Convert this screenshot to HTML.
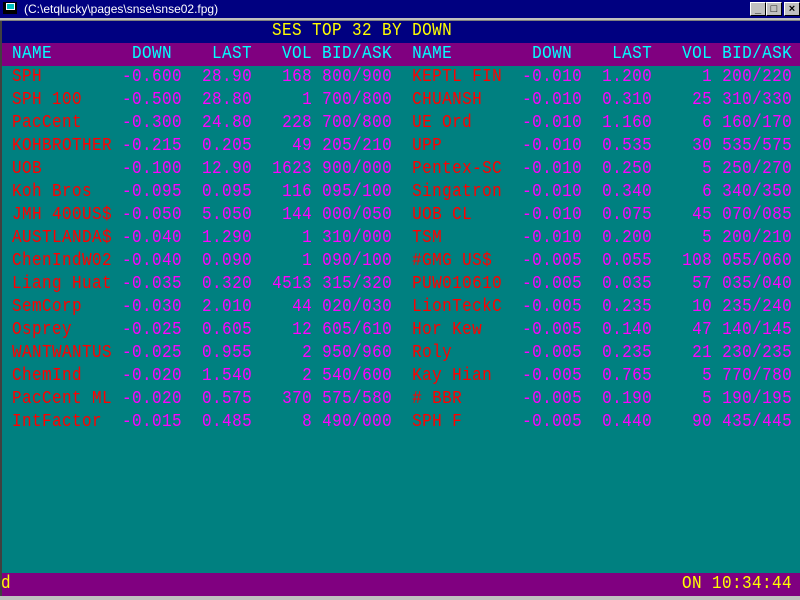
<!DOCTYPE html>
<html><head><meta charset="utf-8"><style>
html,body{margin:0;padding:0;width:800px;height:600px;overflow:hidden;background:#008080;}
#tb{position:absolute;left:0;top:0;width:800px;height:18px;background:#000080;}
#tb .t{position:absolute;left:24px;top:2px;color:#fff;font:12px "Liberation Sans",sans-serif;}
#tb .ic{position:absolute;left:3px;top:2px;width:14px;height:12px;background:#000;}
#tb .ic i{position:absolute;left:3px;top:1px;width:9px;height:7px;background:#00c0c0;border:1px solid #fff;box-sizing:border-box}
.b{position:absolute;top:2px;width:16px;height:14px;background:#c0c0c0;border-top:1px solid #fff;border-left:1px solid #fff;border-right:1px solid #000;border-bottom:1px solid #000;box-sizing:border-box;font:bold 11px "Liberation Sans",sans-serif;text-align:center;line-height:12px;color:#000}
#sep{position:absolute;left:0;top:18px;width:800px;height:3px;background:#c0c0c0;border-bottom:1px solid #808080;box-sizing:border-box}
#nav{position:absolute;left:2px;top:21px;width:798px;height:22px;background:#000080}
#pur{position:absolute;left:2px;top:43px;width:798px;height:23px;background:#800080}
#bot{position:absolute;left:2px;top:573px;width:798px;height:23px;background:#800080}
#lb{position:absolute;left:0;top:21px;width:2px;height:579px;background:#404040}
#bb{position:absolute;left:0;top:596px;width:800px;height:4px;background:#c0c0c0}
.l{position:absolute;left:2px;height:23px;line-height:23px;white-space:pre;font:16px "Liberation Mono",monospace;letter-spacing:0.4px;transform:scale(1,1.18);transform-origin:0 14px;margin-top:2px}
.r{color:#ff0000}.m{color:#ff00ff}.c{color:#00ffff}.y{color:#ffff00}
</style></head><body>
<div id="tb"><div class="ic"><i></i></div><span class="t">(C:\etqlucky\pages\snse\snse02.fpg)</span>
<div class="b" style="left:750px">_</div><div class="b" style="left:766px">□</div><div class="b" style="left:784px">×</div></div>
<div id="sep"></div>
<div id="nav"></div><div id="pur"></div><div id="bot"></div><div id="lb"></div><div id="bb"></div>
<div class="l y" style="top:20px">                           SES TOP 32 BY DOWN</div>
<div class="l c" style="top:43px"> NAME        DOWN    LAST   VOL BID/ASK  NAME        DOWN    LAST   VOL BID/ASK</div>
<div class="l" style="top:66px"> <span class="r">SPH       </span> <span class="m">-0.600  28.90   168 800/900</span>  <span class="r">KEPTL FIN </span> <span class="m">-0.010  1.200     1 200/220</span></div>
<div class="l" style="top:89px"> <span class="r">SPH 100   </span> <span class="m">-0.500  28.80     1 700/800</span>  <span class="r">CHUANSH   </span> <span class="m">-0.010  0.310    25 310/330</span></div>
<div class="l" style="top:112px"> <span class="r">PacCent   </span> <span class="m">-0.300  24.80   228 700/800</span>  <span class="r">UE Ord    </span> <span class="m">-0.010  1.160     6 160/170</span></div>
<div class="l" style="top:135px"> <span class="r">KOHBROTHER</span> <span class="m">-0.215  0.205    49 205/210</span>  <span class="r">UPP       </span> <span class="m">-0.010  0.535    30 535/575</span></div>
<div class="l" style="top:158px"> <span class="r">UOB       </span> <span class="m">-0.100  12.90  1623 900/000</span>  <span class="r">Pentex-SC </span> <span class="m">-0.010  0.250     5 250/270</span></div>
<div class="l" style="top:181px"> <span class="r">Koh Bros  </span> <span class="m">-0.095  0.095   116 095/100</span>  <span class="r">Singatron </span> <span class="m">-0.010  0.340     6 340/350</span></div>
<div class="l" style="top:204px"> <span class="r">JMH 400US$</span> <span class="m">-0.050  5.050   144 000/050</span>  <span class="r">UOB CL    </span> <span class="m">-0.010  0.075    45 070/085</span></div>
<div class="l" style="top:227px"> <span class="r">AUSTLANDA$</span> <span class="m">-0.040  1.290     1 310/000</span>  <span class="r">TSM       </span> <span class="m">-0.010  0.200     5 200/210</span></div>
<div class="l" style="top:250px"> <span class="r">ChenIndW02</span> <span class="m">-0.040  0.090     1 090/100</span>  <span class="r">#GMG US$  </span> <span class="m">-0.005  0.055   108 055/060</span></div>
<div class="l" style="top:273px"> <span class="r">Liang Huat</span> <span class="m">-0.035  0.320  4513 315/320</span>  <span class="r">PUW010610 </span> <span class="m">-0.005  0.035    57 035/040</span></div>
<div class="l" style="top:296px"> <span class="r">SemCorp   </span> <span class="m">-0.030  2.010    44 020/030</span>  <span class="r">LionTeckC </span> <span class="m">-0.005  0.235    10 235/240</span></div>
<div class="l" style="top:319px"> <span class="r">Osprey    </span> <span class="m">-0.025  0.605    12 605/610</span>  <span class="r">Hor Kew   </span> <span class="m">-0.005  0.140    47 140/145</span></div>
<div class="l" style="top:342px"> <span class="r">WANTWANTUS</span> <span class="m">-0.025  0.955     2 950/960</span>  <span class="r">Roly      </span> <span class="m">-0.005  0.235    21 230/235</span></div>
<div class="l" style="top:365px"> <span class="r">ChemInd   </span> <span class="m">-0.020  1.540     2 540/600</span>  <span class="r">Kay Hian  </span> <span class="m">-0.005  0.765     5 770/780</span></div>
<div class="l" style="top:388px"> <span class="r">PacCent ML</span> <span class="m">-0.020  0.575   370 575/580</span>  <span class="r"># BBR     </span> <span class="m">-0.005  0.190     5 190/195</span></div>
<div class="l" style="top:411px"> <span class="r">IntFactor </span> <span class="m">-0.015  0.485     8 490/000</span>  <span class="r">SPH F     </span> <span class="m">-0.005  0.440    90 435/445</span></div>
<div class="l y" style="top:573px;left:1px">d</div>
<div class="l y" style="top:573px;left:682px">ON 10:34:44</div>
</body></html>
